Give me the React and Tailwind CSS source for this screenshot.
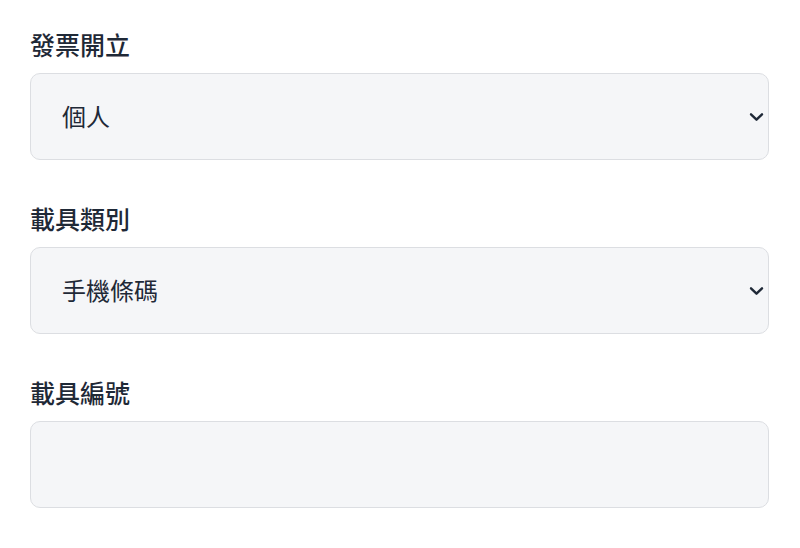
import React from 'react';

function Chevron() {
  return (
    <svg width="15" height="9" viewBox="0 0 15 9" fill="none" className="pointer-events-none absolute right-[5px] top-1/2 -translate-y-1/2">
      <path d="M2 1.8l5.5 5.4 5.5-5.4" stroke="#1f2937" strokeWidth="2.4" strokeLinecap="round" strokeLinejoin="round" />
    </svg>
  );
}

function SelectField({ label, value, options }) {
  return (
    <div className="mb-[43px]">
      <label className="block text-[25px] leading-[32px] font-medium text-[#1f2937] mb-[12px]">{label}</label>
      <div className="relative">
        <select
          defaultValue={value}
          className="appearance-none w-full h-[87px] rounded-[10px] border border-[#dcdee2] bg-[#f5f6f8] pl-[31px] pr-10 text-[24px] text-[#1f2937] outline-none"
        >
          {options.map(o => <option key={o}>{o}</option>)}
        </select>
        <Chevron />
      </div>
    </div>
  );
}

export default function App() {
  return (
    <div
      className="w-[800px] h-[548px] bg-white pl-[30px] pr-[31px] pt-[29px] overflow-hidden"
      style={{ fontFamily: '"Noto Sans", "Noto Sans CJK TC", sans-serif' }}
    >
      <SelectField label="發票開立" value="個人" options={['個人', '公司']} />
      <SelectField label="載具類別" value="手機條碼" options={['手機條碼', '自然人憑證']} />
      <div>
        <label className="block text-[25px] leading-[32px] font-medium text-[#1f2937] mb-[12px]">載具編號</label>
        <input
          type="text"
          className="w-full h-[87px] rounded-[10px] border border-[#dcdee2] bg-[#f5f6f8] px-[31px] text-[24px] text-[#1f2937] outline-none"
        />
      </div>
    </div>
  );
}
